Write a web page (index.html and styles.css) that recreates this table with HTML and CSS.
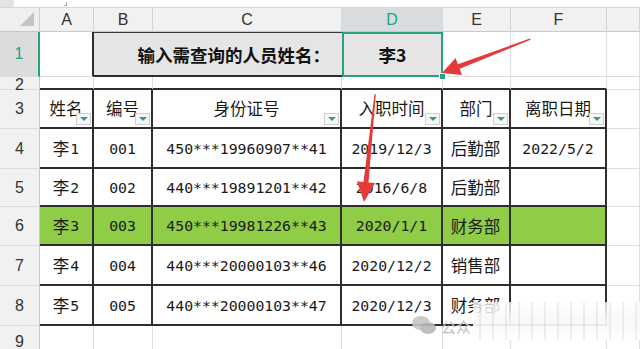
FILE: index.html
```html
<!DOCTYPE html>
<html lang="zh">
<head>
<meta charset="utf-8">
<link rel="stylesheet" href="styles.css">
</head>
<body>
<div class="topbar"><span class="tb-left"></span><span class="tb-mark"></span></div>
<div class="sheet">
  <div class="corner"><svg class="corner-tri" width="16" height="16" viewBox="0 0 16 16"><polygon points="1,15 15,15 15,1" fill="#c4c4c4"/></svg></div>
  <div class="ch">A</div><div class="ch">B</div><div class="ch">C</div><div class="ch ch-sel">D</div><div class="ch">E</div><div class="ch">F</div><div class="ch"></div>

  <div class="rh rh-sel">1</div>
  <div class="c dark-r"></div>
  <div class="c prompt">输入需查询的人员姓名：</div>
  <div class="c input">李3<span class="handle"></span></div>
  <div class="c"></div><div class="c"></div><div class="c"></div>

  <div class="rh rh-short">2</div>
  <div class="c tt"></div><div class="c tt"></div><div class="c tt"></div><div class="c tt"></div><div class="c tt"></div><div class="c tt"></div><div class="c"></div>

  <div class="rh">3</div>
  <div class="c t th">姓名<span class="filter"></span></div>
  <div class="c t th">编号<span class="filter"></span></div>
  <div class="c t th">身份证号<span class="filter"></span></div>
  <div class="c t th">入职时间<span class="filter"></span></div>
  <div class="c t th">部门<span class="filter"></span></div>
  <div class="c t th">离职日期<span class="filter"></span></div>
  <div class="c"></div>

  <div class="rh">4</div>
  <div class="c t"><span class="cjk">李</span>1</div>
  <div class="c t">001</div>
  <div class="c t">450***19960907**41</div>
  <div class="c t">2019/12/3</div>
  <div class="c t"><span class="cjk">后勤部</span></div>
  <div class="c t">2022/5/2</div>
  <div class="c"></div>

  <div class="rh">5</div>
  <div class="c t"><span class="cjk">李</span>2</div>
  <div class="c t">002</div>
  <div class="c t">440***19891201**42</div>
  <div class="c t">2016/6/8</div>
  <div class="c t"><span class="cjk">后勤部</span></div>
  <div class="c t"></div>
  <div class="c"></div>

  <div class="rh">6</div>
  <div class="c t hl"><span class="cjk">李</span>3</div>
  <div class="c t hl">003</div>
  <div class="c t hl">450***19981226**43</div>
  <div class="c t hl">2020/1/1</div>
  <div class="c t hl"><span class="cjk">财务部</span></div>
  <div class="c t hl"></div>
  <div class="c"></div>

  <div class="rh">7</div>
  <div class="c t"><span class="cjk">李</span>4</div>
  <div class="c t">004</div>
  <div class="c t">440***20000103**46</div>
  <div class="c t">2020/12/2</div>
  <div class="c t"><span class="cjk">销售部</span></div>
  <div class="c t"></div>
  <div class="c"></div>

  <div class="rh">8</div>
  <div class="c t"><span class="cjk">李</span>5</div>
  <div class="c t">005</div>
  <div class="c t">440***20000103**47</div>
  <div class="c t">2020/12/3</div>
  <div class="c t"><span class="cjk">财务部</span></div>
  <div class="c t"></div>
  <div class="c"></div>

  <div class="rh rh-last">9</div>
  <div class="c"></div><div class="c"></div><div class="c"></div><div class="c"></div><div class="c"></div><div class="c"></div><div class="c"></div>
</div>

<svg class="arrows" width="640" height="349" viewBox="0 0 640 349">
  <polygon fill="#e53a3a" points="442,73 455.6,58.1 457.9,64.2 530,38.5 530.5,39.8 459.7,68.8 462,74.9"/>
  <polygon fill="#e53a3a" points="364,202 357,181.2 363.5,181.9 374.5,94 375.8,94.2 368.5,182.4 375,183"/>
</svg>

<div class="watermark">
  <svg class="wm-icon" width="26" height="20" viewBox="0 0 26 20">
    <ellipse cx="10" cy="8" rx="9" ry="7" fill="#c6c6c6"/>
    <ellipse cx="17" cy="13" rx="8" ry="6" fill="#b9b9b9"/>
  </svg>
  <span class="wm-text">公众</span>
  <span class="wm-blur"></span>
</div>
</body>
</html>
```

FILE: styles.css
```css
* { box-sizing: border-box; }
html, body { margin: 0; padding: 0; }
body {
  width: 640px;
  height: 349px;
  overflow: hidden;
  background: #ffffff;
  position: relative;
  font-family: "DejaVu Sans Mono", "Noto Sans CJK SC", monospace;
  color: #1a1a1a;
}

.topbar {
  height: 8px;
  display: flex;
  background: #ffffff;
  border-bottom: 1px solid #d6d6d6;
}
.tb-left { width: 14px; background: #e4e4e4; }
.tb-mark {
  width: 3px;
  height: 4px;
  margin-left: 50px;
  margin-top: 2px;
  border-right: 1px solid #aaa;
  border-bottom: 1px solid #aaa;
}

.sheet {
  display: grid;
  grid-template-columns: 40px 54px 59px 189px 101px 68px 96px 1fr;
  grid-template-rows: 24px 45px 13px 39px 40px 38px 39px 40px 40px 1fr;
  height: 341px;
}

.corner {
  background: #efefef;
  border-right: 1px solid #cfcfcf;
  border-bottom: 1px solid #c8c8c8;
  display: flex;
  align-items: flex-end;
  justify-content: flex-end;
  padding: 0 4px 4px 0;
}
.corner-tri { display: block; }

.ch {
  background: #f1f1f1;
  border-right: 1px solid #d4d4d4;
  border-bottom: 1px solid #c8c8c8;
  display: flex;
  align-items: center;
  justify-content: center;
  font-family: "Liberation Sans", "Noto Sans", sans-serif;
  font-size: 16px;
  color: #333;
}
.ch-sel { background: #d9dcde; color: #26a184; }

.rh {
  background: #f1f1f1;
  border-right: 1px solid #c8c8c8;
  border-bottom: 1px solid #dcdcdc;
  display: flex;
  align-items: center;
  justify-content: center;
  font-family: "Liberation Sans", "Noto Sans", sans-serif;
  font-size: 16px;
  color: #333;
  line-height: 1;
}
.rh-sel {
  background: #dcdcdc;
  color: #26a184;
  border-right: 2px solid #26a184;
}
.rh-short { padding-top: 4px; overflow: visible; }
.rh-last { align-items: flex-start; padding-top: 8px; }

.c {
  border-right: 1px solid #dedede;
  border-bottom: 1px solid #dedede;
  display: flex;
  align-items: center;
  justify-content: center;
  font-size: 14.8px;
  position: relative;
  white-space: nowrap;
}
.dark-r { border-right: 2px solid #2e2e2e; }
.tt { border-bottom: 2px solid #2e2e2e; }
.t {
  border-right: 2px solid #2e2e2e;
  border-bottom: 2px solid #2e2e2e;
}
.hl { background: #8fcd46; }
.cjk {
  font-family: "Noto Sans CJK SC", sans-serif;
  font-size: 16.5px;
  margin-right: 1px;
}
.th {
  font-family: "Noto Sans CJK SC", sans-serif;
  font-size: 16.5px;
  padding-bottom: 2px;
}

.filter {
  position: absolute;
  right: 1px;
  bottom: 2px;
  width: 15px;
  height: 12px;
  border: 1px solid #cfcfcf;
  background: #f6f6f6;
}
.filter::after {
  content: "";
  position: absolute;
  left: 3px;
  top: 3px;
  border-left: 4px solid transparent;
  border-right: 4px solid transparent;
  border-top: 4px solid #2a9d9a;
}

.prompt {
  grid-column: span 2;
  background: #e5e5e5;
  border-top: 1px solid #3a3a3a;
  border-right: none;
  border-bottom: 2px solid #2e2e2e;
  justify-content: flex-end;
  padding-right: 12px;
  font-family: "Noto Sans CJK SC", sans-serif;
  font-weight: 700;
  font-size: 17.5px;
  color: #111;
}
.input {
  background: #e5e5e5;
  border: 2px solid #26a184;
  font-family: "Noto Sans CJK SC", sans-serif;
  font-weight: 700;
  font-size: 17.5px;
  color: #111;
  overflow: visible;
  z-index: 2;
}
.handle {
  position: absolute;
  right: -5px;
  bottom: -5px;
  width: 7px;
  height: 7px;
  background: #26a184;
  border: 1px solid #ffffff;
}

.arrows {
  position: absolute;
  left: 0;
  top: 0;
  pointer-events: none;
  z-index: 5;
}

.watermark {
  position: absolute;
  left: 411px;
  top: 302px;
  width: 229px;
  height: 38px;
  display: flex;
  align-items: center;
  z-index: 4;
  pointer-events: none;
}
.wm-icon { margin-top: 8px; opacity: 0.9; }
.wm-text {
  margin-left: 4px;
  margin-top: 10px;
  font-family: "Noto Sans CJK SC", sans-serif;
  font-size: 15px;
  color: #bdbdbd;
}
.wm-blur {
  flex: 1;
  align-self: stretch;
  margin-left: 2px;
  background:
    repeating-linear-gradient(90deg, rgba(255,255,255,0) 0 6px, rgba(170,170,170,0.18) 6px 8px, rgba(255,255,255,0) 8px 13px),
    linear-gradient(180deg, rgba(255,255,255,0.75), rgba(248,248,248,0.95) 50%, rgba(255,255,255,0.85));
}
```
